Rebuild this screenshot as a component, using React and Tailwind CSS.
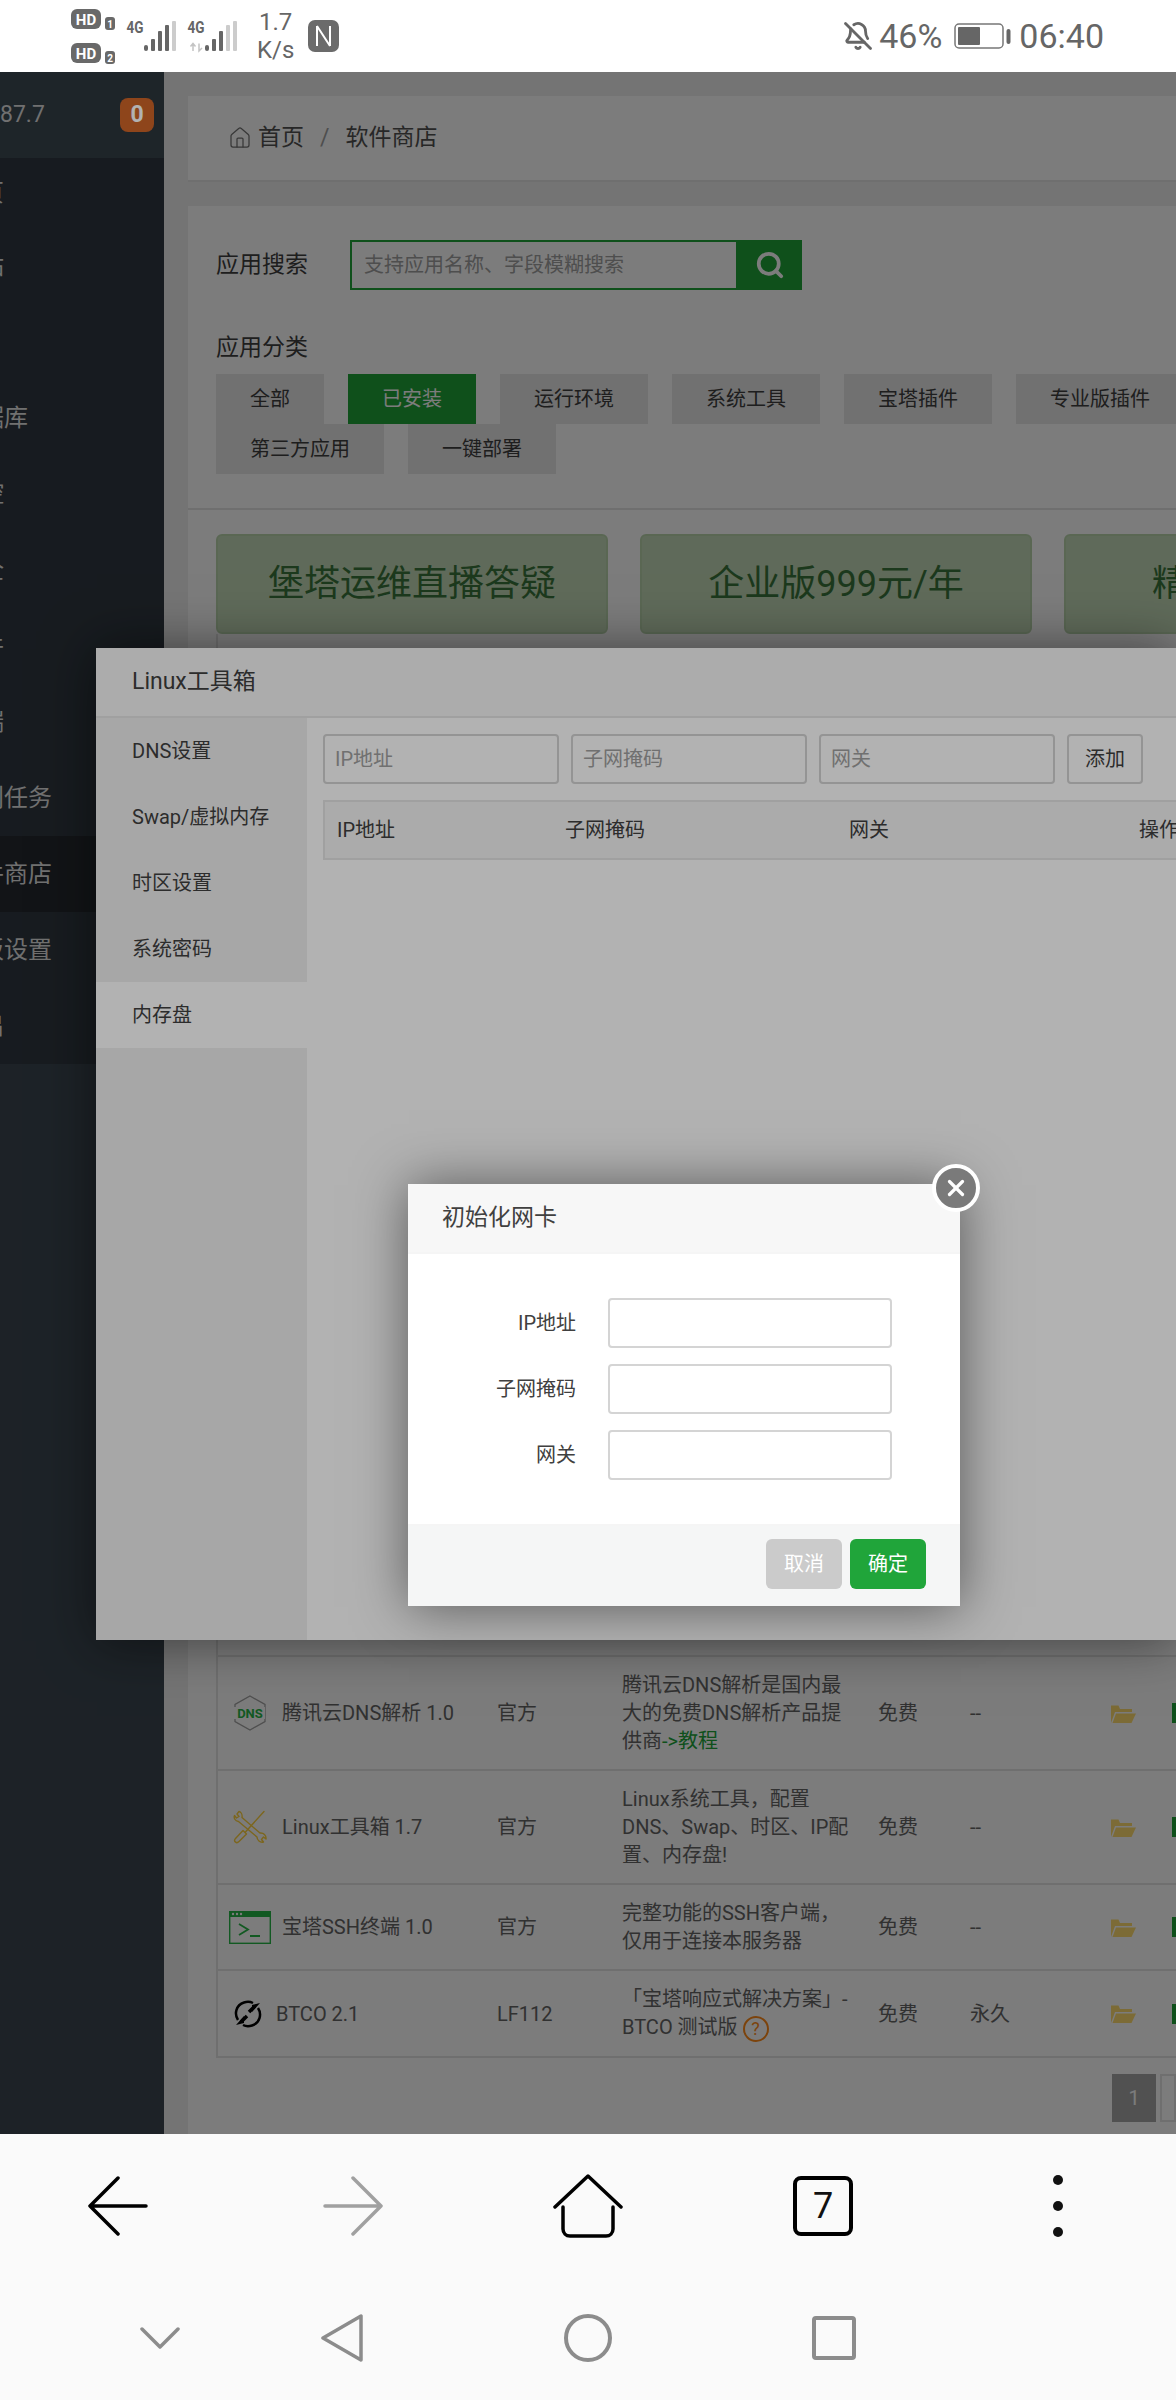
import { BellOff, Home, Search, X } from 'lucide-react';

const menu = ['首页', '网站', 'FTP', '数据库', '监控', '安全', '文件', '终端', '计划任务', '软件商店', '面板设置', '退出'];
const tools = ['DNS设置', 'Swap/虚拟内存', '时区设置', '系统密码', '内存盘'];
const tagsList = ['全部', '已安装', '运行环境', '系统工具', '宝塔插件', '专业版插件', '第三方应用', '一键部署'];
const layerShadow = 'shadow-[1px_1px_50px_rgba(0,0,0,0.5)]';

const SignalIcons = () => (
  <svg width="166" height="72" viewBox="0 0 166 72" className="shrink-0">
    <g fontFamily="Roboto, sans-serif" fontWeight="700" textAnchor="middle">
      <rect x="0" y="9" width="30" height="20" rx="6" fill="#696969" />
      <text x="15" y="24.5" fontSize="15" fill="#fff">HD</text>
      <rect x="34" y="17" width="10" height="13" rx="3" fill="#696969" />
      <text x="39" y="27.5" fontSize="10" fill="#fff">1</text>
      <rect x="0" y="43" width="30" height="20" rx="6" fill="#696969" />
      <text x="15" y="58.5" fontSize="15" fill="#fff">HD</text>
      <rect x="34" y="51" width="10" height="13" rx="3" fill="#696969" />
      <text x="39" y="61.5" fontSize="10" fill="#fff">2</text>
      <text x="64" y="33" fontSize="17" fill="#666" textLength="17" lengthAdjust="spacingAndGlyphs">4G</text>
      <text x="125" y="33" fontSize="17" fill="#666" textLength="17" lengthAdjust="spacingAndGlyphs">4G</text>
    </g>
    <g fill="#666">
      <rect x="73" y="45" width="4" height="6" rx="2" />
      <rect x="80" y="39" width="4" height="12" rx="1" />
      <rect x="87" y="31" width="4" height="20" rx="1" />
      <rect x="94" y="25" width="4" height="26" rx="1" />
      <rect x="101" y="21" width="4" height="30" rx="1" fill="#ccc" />
      <rect x="134" y="45" width="4" height="6" rx="2" />
      <rect x="141" y="39" width="4" height="12" rx="1" />
      <rect x="148" y="31" width="4" height="20" rx="1" />
      <rect x="155" y="25" width="4" height="26" rx="1" fill="#ccc" />
      <rect x="162" y="21" width="4" height="30" rx="1" fill="#ccc" />
    </g>
    <path d="M122 51V44M119.500 46.500L122 43.500L124.500 46.500M128 43.500V51L131 48" fill="none" stroke="#c4c4c4" strokeWidth="1.500" />
  </svg>
);

const NfcIcon = () => (
  <svg width="31" height="32" viewBox="0 0 31 32">
    <rect width="31" height="32" rx="7" fill="#6b6b6b" />
    <path d="M9 6V26M22 6V26M9 6L22 26" fill="none" stroke="#fff" strokeWidth="2" />
  </svg>
);

const BatteryIcon = () => (
  <svg width="57" height="26" viewBox="0 0 57 26">
    <rect x="1" y="1" width="48" height="24" rx="4" fill="none" stroke="#777" strokeWidth="1.500" />
    <rect x="4" y="4" width="22" height="18" rx="1" fill="#666" />
    <rect x="52.500" y="6" width="4" height="15" rx="2" fill="#666" />
  </svg>
);

const DnsIcon = () => (
  <svg width="34" height="36" viewBox="0 0 34 36">
    <path d="M17 1L32 9.500V26.500L17 35L2 26.500V9.500Z" fill="none" stroke="#a3a3a3" strokeWidth="1.300" />
    <rect x="0" y="12" width="32" height="12" fill="#fff" />
    <text x="17" y="22.500" fontSize="13" fontWeight="700" fontFamily="Roboto, sans-serif" textAnchor="middle" fill="#28b848">DNS</text>
  </svg>
);

const ToolsIcon = () => (
  <svg width="34" height="34" viewBox="0 0 34 34" fill="none" stroke="#ffd23f" strokeWidth="1.400" strokeLinejoin="round" strokeLinecap="round">
    <path d="M31 1.500L12 22.500M13.500 24L10 20.500L2.500 28.500C1 30 1.500 31.500 2.500 32C3.500 33 5 32.500 6 31.500Z" />
    <path d="M6 1.500L4 4L6 6.500L3.500 8L1.500 5.500C0.500 8 2 11 5.500 11.500L24 27C24 30 27 33 30.500 32L28.500 29.500L30.500 27L33 29C33.500 25.500 30.500 22.500 27 23L9 7.500C9.500 4.500 8 2 6 1.500Z" />
  </svg>
);

const SshIcon = () => (
  <svg width="42" height="33" viewBox="0 0 42 33">
    <rect x="0.700" y="0.700" width="40.600" height="31.600" fill="none" stroke="#28b848" strokeWidth="1.400" />
    <rect x="0" y="0" width="42" height="6" fill="#28b848" />
    <g fill="#fff">
      <circle cx="4" cy="3" r="1.200" />
      <circle cx="8" cy="3" r="1.200" />
      <circle cx="12" cy="3" r="1.200" />
    </g>
    <path d="M10 13L19 18.500L10 24M21 25H31" fill="none" stroke="#28b848" strokeWidth="1.800" />
  </svg>
);

const BtcoIcon = () => (
  <svg width="30" height="28" viewBox="0 0 30 28" fill="none" stroke="#000" strokeWidth="2.500">
    <path d="M5 20C1 14 3 5 11 2.500C14 1.500 17 1.500 20 3" />
    <path d="M25 8C29 14 27 23 19 25.500C16 26.500 13 26.500 10 25" />
    <path d="M27 3L19 5V12L27 3ZM3 25L11 23V16L3 25Z" fill="#000" stroke="none" />
    <path d="M16 12L22 6M14 16L8 22" strokeWidth="3.500" />
  </svg>
);

const FolderIcon = () => (
  <svg width="25" height="19" viewBox="0 0 25 19" fill="#ffdd70">
    <path d="M0 1.500V19L4 8H21V5H9L7.500 1.500Z" />
    <path d="M5 9.500H25L20.500 19H1.500Z" />
  </svg>
);

const rows = [
  {
    icon: <DnsIcon />,
    name: '腾讯云DNS解析 1.0',
    by: '官方',
    desc: (
      <>
        腾讯云DNS解析是国内最
        <br />
        大的免费DNS解析产品提
        <br />
        供商<span className="text-[#20a53a]">-&gt;教程</span>
      </>
    ),
    term: '--',
  },
  {
    icon: <ToolsIcon />,
    name: 'Linux工具箱 1.7',
    by: '官方',
    desc: (
      <>
        Linux系统工具，配置
        <br />
        DNS、Swap、时区、IP配
        <br />
        置、内存盘!
      </>
    ),
    term: '--',
  },
  {
    icon: <SshIcon />,
    name: '宝塔SSH终端 1.0',
    by: '官方',
    desc: (
      <>
        完整功能的SSH客户端，
        <br />
        仅用于连接本服务器
      </>
    ),
    term: '--',
  },
  {
    icon: <BtcoIcon />,
    narrow: true,
    name: 'BTCO 2.1',
    by: 'LF112',
    desc: (
      <>
        「宝塔响应式解决方案」-
        <br />
        BTCO 测试版{' '}
        <span className="inline-flex h-6.5 w-6.5 items-center justify-center rounded-full border-2 border-[#ff8c1a] align-middle text-lg leading-none text-[#ff8c1a]">?</span>
      </>
    ),
    term: '永久',
  },
];

const Sidebar = () => (
  <aside className="flex w-41 shrink-0 flex-col overflow-hidden bg-[#2a3239] text-neutral-400">
    <div className="flex h-21.5 shrink-0 items-center justify-between bg-[#2c353c] pr-2.5">
      <span>87.7</span>
      <span className="flex h-8.5 w-8.5 items-center justify-center rounded-lg bg-[#cc6327] font-bold text-white">0</span>
    </div>
    <nav className="bg-[#22282e] text-2xl">
      {menu.map((item, i) => (
        <div key={item} className={`flex items-center ${i === 0 ? 'h-17.5' : 'h-19'} ${item === '软件商店' ? 'bg-[#1a1d21]' : ''}`}>
          <span className="-ml-11 whitespace-nowrap">{item}</span>
        </div>
      ))}
    </nav>
  </aside>
);

const Main = () => (
  <main className="relative flex min-w-0 flex-1 flex-col bg-[#f0f0f0] pt-6 pl-6 text-neutral-700">
    <div className="flex h-21.5 shrink-0 items-center border-b-2 border-neutral-200 bg-white px-10 text-neutral-600">
      <Home size={24} strokeWidth={1.25} className="text-neutral-500" />
      <span className="ml-1.5">首页</span>
      <span className="mx-4 text-neutral-400">/</span>
      <span>软件商店</span>
    </div>

    <section className="mt-6 flex flex-1 flex-col overflow-hidden bg-white">
      <div className="border-b-2 border-neutral-200 px-7 pt-8.5 pb-8.5">
        <div className="flex items-center">
          <span className="w-33.5">应用搜索</span>
          <input
            placeholder="支持应用名称、字段模糊搜索"
            className="h-12.5 w-97 border-2 border-[#20a53a] bg-white px-3 text-xl placeholder:text-neutral-400"
          />
          <button className="flex h-12.5 w-16 items-center justify-center bg-[#20a53a] text-white">
            <Search size={30} strokeWidth={3} />
          </button>
        </div>
        <div className="mt-11 leading-7">应用分类</div>
        <div className="mt-3 flex w-250 flex-wrap gap-x-6">
          {tagsList.map((tag) => (
            <span
              key={tag}
              className={`flex h-12.5 items-center px-8.5 text-xl ${tag === '已安装' ? 'bg-[#20a53a] text-white' : 'bg-neutral-200/90'}`}
            >
              {tag}
            </span>
          ))}
        </div>
      </div>

      <div className="mt-6 flex w-[1400px] gap-8 px-7">
        {['堡塔运维直播答疑', '企业版999元/年', '精品软件推荐'].map((card) => (
          <div key={card} className="flex h-25 w-98 shrink-0 items-center justify-center rounded-md border-2 border-[#b9d4ad] bg-[#c5dcb9] text-4xl text-[#3c763d]">
            {card}
          </div>
        ))}
      </div>

      <div className="ml-7 flex-1 border-b-2 border-l-2 border-neutral-200" />
      <div className="ml-7 text-xl text-[#666]">
        {rows.map((row) => (
          <div key={row.name} className="grid grid-cols-[279px_125px_256px_92px_141px_1fr] items-center border-b-2 border-l-2 border-neutral-200 py-3.5 leading-7">
            <div className={`flex items-center pl-2 ${row.narrow ? 'gap-1.5' : 'gap-2'}`}>
              <span className={`flex shrink-0 justify-center ${row.narrow ? 'w-11' : 'w-12'}`}>{row.icon}</span>
              <span className="whitespace-nowrap">{row.name}</span>
            </div>
            <span>{row.by}</span>
            <span className="whitespace-nowrap">{row.desc}</span>
            <span>免费</span>
            <span>{row.term}</span>
            <span className="flex items-center gap-9">
              <FolderIcon />
              <span className="h-5 w-4 bg-[#20a53a]" />
            </span>
          </div>
        ))}
      </div>
      <div className="flex h-19 shrink-0 justify-end gap-1 pt-4 text-xl">
        <span className="flex h-12 w-11 items-center justify-center bg-[#a8a8a8] text-white">1</span>
        <span className="h-12 w-4 border-2 border-neutral-200" />
      </div>
    </section>

    <div className="absolute inset-0 bg-black/30" />
  </main>
);

const ToolsDialog = () => (
  <div className={`absolute top-144 right-0 left-24 flex h-248 flex-col overflow-hidden bg-white text-neutral-700 ${layerShadow}`}>
    <div className="flex h-17.5 shrink-0 items-center border-b-2 border-neutral-200 bg-[#f7f7f7] px-9">Linux工具箱</div>
    <div className="flex min-h-0 flex-1">
      <div className="w-[211px] shrink-0 bg-[#f0f0f0] text-xl">
        {tools.map((tool) => (
          <div key={tool} className={`flex h-16.5 items-center px-9 ${tool === '内存盘' ? 'bg-white' : ''}`}>
            {tool}
          </div>
        ))}
      </div>
      <div className="min-w-0 flex-1 pt-4 pl-4 text-xl">
        <div className="flex gap-3">
          {['IP地址', '子网掩码', '网关'].map((field) => (
            <input key={field} placeholder={field} className="h-12.5 w-59 rounded-sm border-2 border-neutral-300 px-2.5 placeholder:text-neutral-400" />
          ))}
          <button className="h-12.5 rounded-sm border-2 border-neutral-300 px-4">添加</button>
        </div>
        <div className="mt-4 grid h-15 w-[900px] grid-cols-[228px_284px_290px_100px] items-center border-2 border-neutral-200 bg-neutral-100 pl-3">
          <span>IP地址</span>
          <span>子网掩码</span>
          <span>网关</span>
          <span>操作</span>
        </div>
      </div>
    </div>
  </div>
);

const NicModal = () => (
  <div className={`absolute top-278 left-102 w-138 bg-white text-neutral-700 ${layerShadow}`}>
    <div className="flex h-17.5 items-center border-b-2 border-neutral-100 bg-[#f7f7f7] px-8.5">初始化网卡</div>
    <div className="flex flex-col gap-4 py-11 text-xl">
      {['IP地址', '子网掩码', '网关'].map((field) => (
        <div key={field} className="flex items-center">
          <label className="w-42 text-right">{field}</label>
          <input className="ml-8 h-12.5 w-71 rounded-sm border-2 border-neutral-300" />
        </div>
      ))}
    </div>
    <div className="flex h-20.5 items-center justify-end gap-2 border-t-2 border-neutral-100 bg-[#f5f6f6] pr-8.5 pb-1 text-xl text-white">
      <button className="h-12.5 w-19 rounded-md bg-[#cbcbcb]">取消</button>
      <button className="h-12.5 w-19 rounded-md bg-[#20a53a]">确定</button>
    </div>
    <button className="absolute -top-5 -right-5 flex h-12 w-12 items-center justify-center rounded-full border-4 border-white bg-[#7a7a7a] text-white">
      <X size={26} strokeWidth={3} />
    </button>
  </div>
);

const BrowserBar = () => (
  <div className="flex h-[266px] shrink-0 flex-col bg-[#fafafa] pt-9">
    <div className="grid h-18 grid-cols-5 place-items-center">
      <svg width="60" height="60" viewBox="0 0 60 60" fill="none" stroke="#000" strokeWidth="3.500" strokeLinecap="round" strokeLinejoin="round">
        <path d="M30 2L2 30L30 58M2 30H58" />
      </svg>
      <svg width="60" height="60" viewBox="0 0 60 60" fill="none" stroke="#a0a0a0" strokeWidth="3.500" strokeLinecap="round" strokeLinejoin="round">
        <path d="M30 2L58 30L30 58M58 30H2" />
      </svg>
      <svg width="70" height="64" viewBox="0 0 70 64" fill="none" stroke="#000" strokeWidth="3.500" strokeLinecap="round" strokeLinejoin="round">
        <path d="M2 33L35 2L68 33" />
        <path d="M10 33V55C10 59 13 62 17 62H53C57 62 60 59 60 55V33" />
      </svg>
      <div className="flex h-15 w-15 items-center justify-center rounded-lg border-4 border-black text-4xl text-[#111]">7</div>
      <div className="flex flex-col gap-4">
        <span className="h-2.5 w-2.5 rounded-full bg-[#111]" />
        <span className="h-2.5 w-2.5 rounded-full bg-[#111]" />
        <span className="h-2.5 w-2.5 rounded-full bg-[#111]" />
      </div>
    </div>
    <div className="mt-18 flex h-12 items-center pl-35">
      <svg width="40" height="22" viewBox="0 0 40 22" fill="none" stroke="#8c8c8c" strokeWidth="3.500" strokeLinecap="round" strokeLinejoin="round">
        <path d="M2 2L20 20L38 2" />
      </svg>
      <svg width="44" height="48" viewBox="0 0 44 48" fill="none" stroke="#8c8c8c" strokeWidth="3.500" strokeLinejoin="round" className="ml-35">
        <path d="M41 2V46L3 24Z" />
      </svg>
      <div className="ml-50 h-12 w-12 rounded-full border-4 border-[#8c8c8c]" />
      <div className="ml-50 h-11 w-11 rounded-sm border-4 border-[#8c8c8c]" />
    </div>
  </div>
);

export default function App() {
  return (
    <div className="flex h-[2400px] w-full flex-col overflow-hidden bg-white font-['Roboto','Noto_Sans_CJK_SC',sans-serif] text-[23px]">
      <header className="flex h-18 shrink-0 items-center justify-between pr-18 pl-[71px] text-[#666]">
        <div className="flex items-center">
          <SignalIcons />
          <div className="ml-5 flex flex-col items-center text-2xl leading-7">
            <span>1.7</span>
            <span>K/s</span>
          </div>
          <div className="ml-3.5">
            <NfcIcon />
          </div>
        </div>
        <div className="flex items-center text-[34px]">
          <BellOff size={30} strokeWidth={2.25} />
          <span className="ml-1.5">46%</span>
          <span className="ml-3">
            <BatteryIcon />
          </span>
          <span className="ml-2">06:40</span>
        </div>
      </header>

      <div className="relative flex min-h-0 flex-1 overflow-hidden">
        <Sidebar />
        <Main />
        <ToolsDialog />
        <div className="absolute inset-0 bg-black/30" />
        <NicModal />
      </div>

      <BrowserBar />
    </div>
  );
}
